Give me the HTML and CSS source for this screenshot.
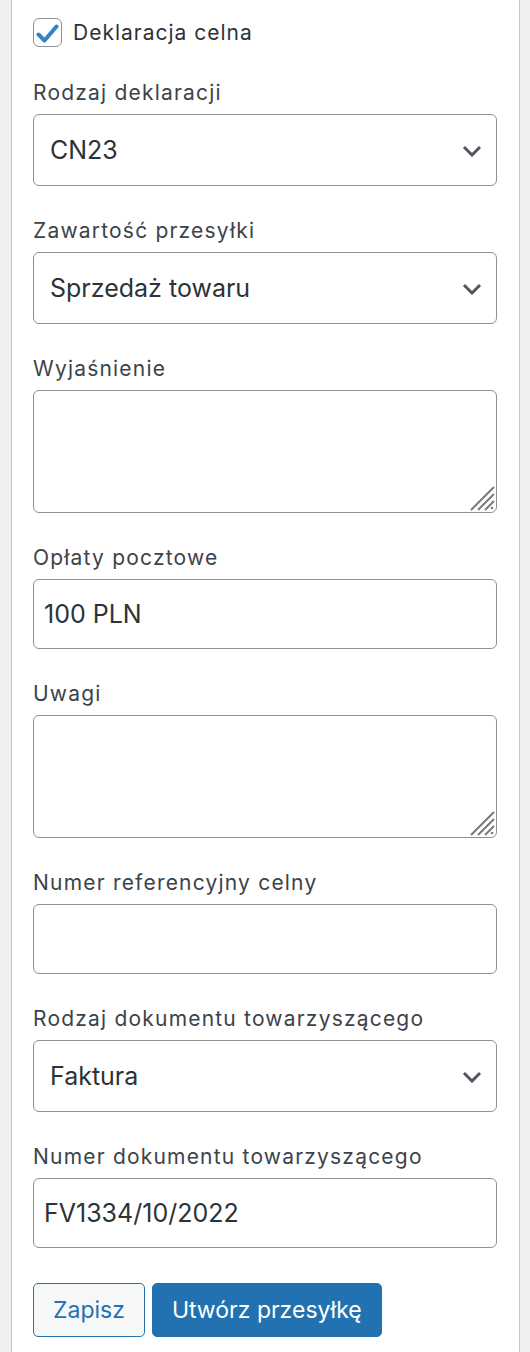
FILE: index.html
```html
<!DOCTYPE html>
<html lang="pl">
<head>
    <meta charset="UTF-8">
    <meta name="viewport" content="width=device-width, initial-scale=1.0">
    <title>Deklaracja celna</title>
    <link rel="stylesheet" href="styles.css">
</head>
<body>
    <div class="panel">
        <label class="check-row">
            <span class="check-box">
                <svg width="23" height="20" viewBox="0 0 23 20"><path d="M2.5 10.5 L8.5 16.5 L20.5 2.5" fill="none" stroke="#3582c4" stroke-width="4" stroke-linecap="round" stroke-linejoin="round"/></svg>
            </span>
            Deklaracja celna
        </label>

        <div class="field">
            <label class="field-label">Rodzaj deklaracji</label>
            <div class="select-wrap">
                <select class="select">
                    <option>CN23</option>
                </select>
                <svg class="chevron" width="20" height="12" viewBox="0 0 20 12"><path d="M2 2 L10 10 L18 2" fill="none" stroke="#50575e" stroke-width="3"/></svg>
            </div>
        </div>

        <div class="field">
            <label class="field-label">Zawartość przesyłki</label>
            <div class="select-wrap">
                <select class="select">
                    <option>Sprzedaż towaru</option>
                </select>
                <svg class="chevron" width="20" height="12" viewBox="0 0 20 12"><path d="M2 2 L10 10 L18 2" fill="none" stroke="#50575e" stroke-width="3"/></svg>
            </div>
        </div>

        <div class="field">
            <label class="field-label">Wyjaśnienie</label>
            <div class="area-wrap">
                <textarea class="area"></textarea>
                <svg class="grip" width="26" height="26" viewBox="0 0 26 26"><path d="M2 25 L25 2 M9 25 L25 9 M16 25 L25 16" stroke="#7a7a7a" stroke-width="2"/><circle cx="23" cy="23" r="1.3" fill="#7a7a7a"/></svg>
            </div>
        </div>

        <div class="field">
            <label class="field-label">Opłaty pocztowe</label>
            <input class="input" type="text" value="100 PLN">
        </div>

        <div class="field">
            <label class="field-label">Uwagi</label>
            <div class="area-wrap">
                <textarea class="area"></textarea>
                <svg class="grip" width="26" height="26" viewBox="0 0 26 26"><path d="M2 25 L25 2 M9 25 L25 9 M16 25 L25 16" stroke="#7a7a7a" stroke-width="2"/><circle cx="23" cy="23" r="1.3" fill="#7a7a7a"/></svg>
            </div>
        </div>

        <div class="field">
            <label class="field-label">Numer referencyjny celny</label>
            <input class="input" type="text" value="">
        </div>

        <div class="field">
            <label class="field-label">Rodzaj dokumentu towarzyszącego</label>
            <div class="select-wrap">
                <select class="select">
                    <option>Faktura</option>
                </select>
                <svg class="chevron" width="20" height="12" viewBox="0 0 20 12"><path d="M2 2 L10 10 L18 2" fill="none" stroke="#50575e" stroke-width="3"/></svg>
            </div>
        </div>

        <div class="field">
            <label class="field-label">Numer dokumentu towarzyszącego</label>
            <input class="input" type="text" value="FV1334/10/2022">
        </div>

        <div class="actions">
            <button class="button">Zapisz</button>
            <button class="button button-primary">Utwórz przesyłkę</button>
        </div>
    </div>
</body>
</html>
```

FILE: styles.css
```css
body {
    margin: 0;
    padding: 0;
    background-color: #f0f0f1;
    font-family: Inter, "Liberation Sans", sans-serif;
    color: #3c434a;
}

.panel {
    margin-left: 11px;
    width: 509px;
    min-height: 1352px;
    box-sizing: border-box;
    background-color: #fff;
    border-left: 1px solid #c3c4c7;
    border-right: 1px solid #c3c4c7;
    padding: 18px 22px 0 21px;
}

.check-row {
    display: flex;
    align-items: center;
    gap: 11px;
    height: 29px;
    font-size: 21px;
    letter-spacing: 1px;
    color: #2c3338;
    margin-bottom: 32px;
}

.check-box {
    width: 29px;
    height: 29px;
    box-sizing: border-box;
    border: 1px solid #8c8f94;
    border-radius: 6px;
    display: flex;
    align-items: center;
    justify-content: center;
}

.check-box svg {
    margin-top: 2px;
    margin-left: -1px;
}

.field {
    margin-bottom: 31px;
}

.field-label {
    display: block;
    font-size: 21px;
    letter-spacing: 1.2px;
    line-height: 28px;
    margin-bottom: 7px;
}

.select-wrap,
.area-wrap {
    position: relative;
}

.select,
.input,
.area {
    display: block;
    width: 100%;
    box-sizing: border-box;
    margin: 0;
    border: 1px solid #8c8f94;
    border-radius: 6px;
    background-color: #fff;
    color: #2c3338;
    font-family: Inter, "Liberation Sans", sans-serif;
    font-size: 25px;
    outline: none;
}

.select {
    -webkit-appearance: none;
    appearance: none;
    height: 72px;
    padding: 0 50px 0 16px;
}

.chevron {
    position: absolute;
    right: 15px;
    top: 31px;
    pointer-events: none;
}

.input {
    height: 70px;
    padding: 0 10px;
}

.area {
    height: 123px;
    resize: none;
    padding: 10px;
}

.grip {
    position: absolute;
    right: 2px;
    bottom: 2px;
    pointer-events: none;
}

.actions {
    display: flex;
    gap: 7px;
    padding-top: 4px;
}

.button {
    height: 54px;
    padding: 0 19px;
    border: 1px solid #2271b1;
    border-radius: 5px;
    background-color: #f6f7f7;
    color: #2271b1;
    font-family: Inter, "Liberation Sans", sans-serif;
    font-size: 23px;
    cursor: pointer;
}

.button-primary {
    background-color: #2271b1;
    color: #fff;
}
```
